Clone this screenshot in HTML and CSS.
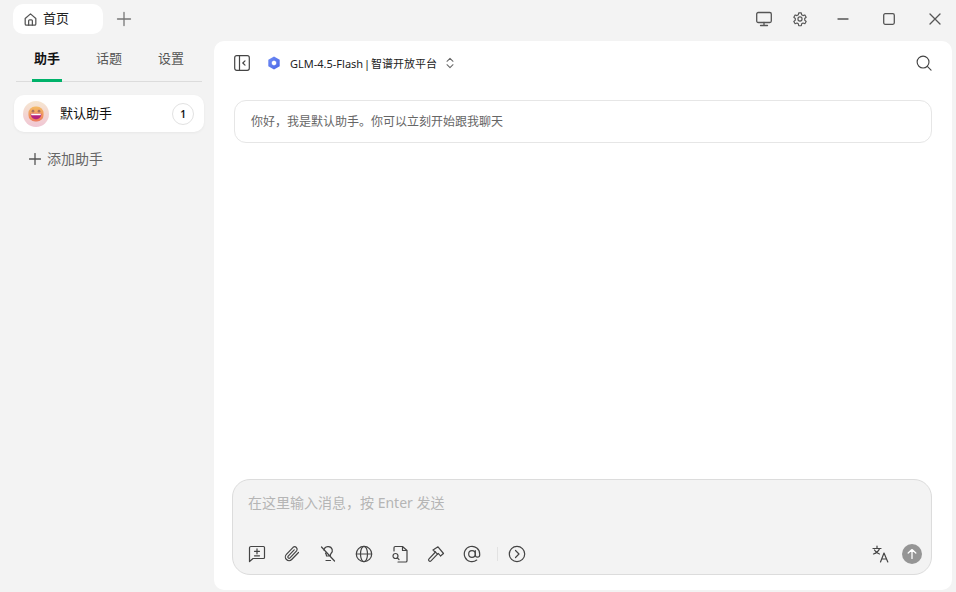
FILE: index.html
```html
<!DOCTYPE html>
<html lang="zh-CN">
<head>
    <meta charset="UTF-8">
    <title>首页</title>
    <link rel="stylesheet" href="styles.css">
</head>
<body>
    <div class="titlebar">
        <div class="tab">
            <svg class="icon-home" width="15" height="15" viewBox="0 0 24 24"><path d="M3.500 10.500 12 3l8.500 7.500V19a2 2 0 0 1-2 2h-13a2 2 0 0 1-2-2z"/><path d="M9 21v-7a1.500 1.500 0 0 1 1.500-1.500h3A1.500 1.500 0 0 1 15 14v7"/></svg>
            <span class="tab-label">首页</span>
        </div>
        <svg class="add-tab" width="16" height="16" viewBox="0 0 16 16"><path d="M8 1.500v13M1.500 8h13"/></svg>
        <div class="title-tools">
            <svg width="18" height="18" viewBox="0 0 18 18"><rect x="1.700" y="2.500" width="14.600" height="10" rx="1.500"/><path d="M9 12.500v3M5.500 15.500h7" /></svg>
            <svg class="gear" width="18" height="18" viewBox="-2 -2 28 28"><path d="M10 2.500h4l.6 3 2.100 1.200 2.900-1 2 3.500-2.300 2v2.600l2.300 2-2 3.500-2.900-1-2.100 1.200-.6 3h-4l-.6-3-2.100-1.200-2.900 1-2-3.500 2.300-2v-2.600l-2.300-2 2-3.500 2.900 1 2.100-1.200z"/><circle cx="12" cy="12" r="3.200"/></svg>
        </div>
        <div class="win-btns">
            <svg width="12" height="12" viewBox="0 0 12 12"><path d="M1 6h10"/></svg>
            <svg width="12" height="12" viewBox="0 0 12 12"><rect x="0.700" y="0.700" width="10.600" height="10.600" rx="1.500"/></svg>
            <svg width="12" height="12" viewBox="0 0 12 12"><path d="m1 1 10 10M11 1 1 11"/></svg>
        </div>
    </div>

    <div class="content">
        <aside class="sidebar">
            <div class="tabs">
                <div class="side-tab active">助手</div>
                <div class="side-tab">话题</div>
                <div class="side-tab">设置</div>
            </div>
            <div class="assistant">
                <div class="avatar">
                    <svg width="16" height="16" viewBox="0 0 18 18" class="emoji">
                        <defs><linearGradient id="face" x1="0" y1="0" x2="0" y2="1"><stop offset="0" stop-color="#f4bc63"/><stop offset="1" stop-color="#ee7a5c"/></linearGradient></defs>
                        <rect x="0.500" y="0.500" width="17" height="17" rx="7.500" fill="url(#face)"/>
                        <circle cx="5.600" cy="5.800" r="1.500" fill="#a9705e"/>
                        <circle cx="12.400" cy="5.800" r="1.500" fill="#a9705e"/>
                        <path d="M3 8.800h12c0 3.700-2.700 6.200-6 6.200s-6-2.500-6-6.200z" fill="#b4227e"/>
                        <path d="M3.500 8.800h11c0 .8-.2 1.300-.4 1.700H3.900c-.2-.4-.4-.9-.4-1.700z" fill="#fff"/>
                    </svg>
                </div>
                <span class="assistant-name">默认助手</span>
                <span class="count">1</span>
            </div>
            <div class="add-assistant">
                <svg width="12" height="12" viewBox="0 0 12 12"><path d="M6 .5v11M.5 6h11"/></svg>
                <span>添加助手</span>
            </div>
        </aside>

        <main class="main">
            <header class="chat-head">
                <svg class="stroke-icon" width="16" height="16" viewBox="0 0 16 16"><rect x="0.700" y="0.700" width="14.600" height="14.600" rx="2"/><path d="M5.500 1v14M11 5.800 8.800 8l2.200 2.200"/></svg>
                <svg class="model-logo" width="14" height="14" viewBox="0 0 14 14">
                    <defs><linearGradient id="logo" x1="0" y1="0" x2="1" y2="1"><stop offset="0" stop-color="#6f8df5"/><stop offset="1" stop-color="#4b66e6"/></linearGradient></defs>
                    <path d="M7 .5l5.700 3.200v6.600L7 13.500l-5.700-3.200V3.700z" fill="url(#logo)"/><path d="M7 4.500l2.200 1.200v2.600L7 9.500 4.800 8.300V5.700z" fill="#fff"/>
                </svg>
                <span class="model-name">GLM-4.5-Flash | 智谱开放平台</span>
                <svg class="stroke-icon chevrons" width="10" height="12" viewBox="0 0 10 14"><path d="M1.500 5 5 1.500 8.500 5M1.500 9 5 12.500 8.500 9"/></svg>
                <svg class="stroke-icon search" width="16" height="16" viewBox="0 0 17 17"><circle cx="7.500" cy="7.500" r="6.300"/><path d="m12.300 12.300 3.700 3.700"/></svg>
            </header>

            <div class="messages">
                <div class="bubble">你好，我是默认助手。你可以立刻开始跟我聊天</div>
            </div>

            <div class="composer">
                <div class="placeholder">在这里输入消息，按 Enter 发送</div>
                <div class="toolbar">
                    <svg class="stroke-icon" width="18" height="18" viewBox="0 0 18 18"><path d="M3 1.500h12.500a1 1 0 0 1 1 1v10a1 1 0 0 1-1 1H5l-3.500 3V3a1.500 1.500 0 0 1 1.500-1.500z"/><path d="M9 3.800v5M6.500 6.300h5M6.500 10.800h5"/></svg>
                    <svg class="stroke-icon clip" width="18" height="18" viewBox="0 0 18 18"><path d="m15.500 7.500-6.800 7a3.700 3.700 0 0 1-5.300-5.200l6.700-7a2.500 2.500 0 0 1 3.500 3.500l-6.600 7a1.200 1.200 0 0 1-1.800-1.700l6-6.300"/></svg>
                    <svg class="stroke-icon" width="18" height="18" viewBox="0 0 18 18"><path d="M5 5.500a4.200 4.200 0 0 1 8.200-1c.6 1.800-.3 3-1.200 4-.6.700-.7 1.500-.7 2.500H7.500c0-1.300-.4-2-1-2.800M7 15.500h4.500M2.500 2l13 14"/></svg>
                    <svg class="stroke-icon" width="18" height="18" viewBox="0 0 18 18"><circle cx="9" cy="9" r="7.700"/><ellipse cx="9" cy="9" rx="3.500" ry="7.700"/><path d="M1.500 9h15"/></svg>
                    <svg class="stroke-icon" width="18" height="18" viewBox="0 0 18 18"><path d="M3 6V2.800a1.300 1.300 0 0 1 1.300-1.300h7.200L16 5.500v10.200a1.300 1.300 0 0 1-1.300 1.300H7M11.500 1.500v4H16"/><circle cx="4.500" cy="11" r="2.500"/><path d="m6.300 12.800 1.700 1.700"/></svg>
                    <svg class="stroke-icon" width="18" height="18" viewBox="0 0 18 18"><path d="M8.500 7 2 13.800a1.400 1.400 0 0 0 2 2l6.500-6.600"/><path d="M6 5 11 1.800l5.500 6.700-3 2.500-2-2.500-1 .7-2-2z"/></svg>
                    <svg class="stroke-icon" width="18" height="18" viewBox="0 0 18 18"><circle cx="9" cy="9" r="3.300"/><path d="M12.300 5.700V10a2.200 2.200 0 0 0 4.400 0V9a7.700 7.700 0 1 0-3 6.100"/></svg>
                    <span class="tool-sep"></span>
                    <svg class="stroke-icon" width="18" height="18" viewBox="0 0 18 18"><circle cx="9" cy="9" r="7.700"/><path d="m7.500 5.500 3.500 3.500-3.500 3.500"/></svg>
                    <div class="toolbar-right">
                        <svg class="stroke-icon" width="18" height="18" viewBox="0 0 18 18"><path d="M1 3.500h8M5 1v2.500M7.500 3.500C6.500 6.500 4.500 8 1.500 9M2.500 5c1 2 3 3.500 5 4M8.500 17l3.500-9 3.800 9M9.800 14h4.800"/></svg>
                        <div class="send">
                            <svg width="10" height="10" viewBox="0 0 10 10"><path d="M5 9.500v-9M1.200 4 5 .5 8.800 4"/></svg>
                        </div>
                    </div>
                </div>
            </div>
        </main>
    </div>
</body>
</html>
```

FILE: styles.css
```css
* {
    box-sizing: border-box;
}

html, body {
    margin: 0;
    height: 100%;
}

body {
    display: flex;
    flex-direction: column;
    height: 592px;
    overflow: hidden;
    background-color: #f3f3f3;
    font-family: "Noto Sans", "Noto Sans CJK SC", sans-serif;
    color: #222;
}

svg {
    display: block;
    flex: none;
    fill: none;
    stroke: #555;
    stroke-width: 1.300;
    stroke-linecap: round;
    stroke-linejoin: round;
}

.icon-home {
    stroke-width: 2;
}

.gear {
    stroke-width: 1.800;
}

.titlebar {
    display: flex;
    align-items: center;
    height: 41px;
    padding: 4px 0 7px 13px;
}

.tab {
    display: flex;
    align-items: center;
    gap: 5px;
    width: 90px;
    height: 30px;
    padding-left: 10px;
    background-color: #fff;
    border-radius: 10px;
    font-size: 13px;
    line-height: 28px;
}

.tab-label {
    margin-top: -2px;
}

.add-tab {
    margin-left: 13px;
    stroke: #777;
}

.title-tools {
    display: flex;
    gap: 18px;
    margin-left: auto;
    margin-right: 28px;
}

.win-btns {
    display: flex;
    gap: 34px;
    margin-right: 15px;
}

.content {
    flex: 1;
    display: flex;
    min-height: 0;
}

.sidebar {
    width: 214px;
    padding: 0 10px 0 14px;
}

.tabs {
    display: flex;
    margin: 0 2px 13px 2px;
    border-bottom: 1px solid #dcdcdc;
}

.side-tab {
    flex: 1;
    height: 40px;
    padding-top: 7px;
    text-align: center;
    font-size: 13px;
    line-height: 20px;
    color: #555;
}

.side-tab.active {
    position: relative;
    color: #111;
    font-weight: 700;
}

.side-tab.active::after {
    content: "";
    position: absolute;
    left: 16px;
    bottom: -1px;
    width: 30px;
    height: 3px;
    background-color: #00b26a;
}

.assistant {
    display: flex;
    align-items: center;
    height: 37px;
    padding: 0 10px 0 9px;
    background-color: #fff;
    border-radius: 10px;
    box-shadow: 0 1px 3px rgba(0, 0, 0, 0.05);
    font-size: 13px;
}

.avatar {
    display: flex;
    align-items: center;
    justify-content: center;
    width: 26px;
    height: 26px;
    border-radius: 50%;
    background: linear-gradient(#f6e6d0, #f0c6d4);
}

.emoji {
    stroke: none;
}

.assistant-name {
    margin: -2px 0 0 11px;
    line-height: 36px;
    color: #111;
}

.count {
    margin-left: auto;
    width: 22px;
    height: 22px;
    border: 1px solid #e2e2e2;
    border-radius: 50%;
    text-align: center;
    font-size: 10px;
    font-weight: 600;
    line-height: 20px;
    color: #111;
}

.add-assistant {
    display: flex;
    align-items: center;
    gap: 6px;
    margin: 17px 0 0 15px;
    font-size: 14px;
    line-height: 20px;
    color: #666;
}

.main {
    flex: 1;
    display: flex;
    flex-direction: column;
    margin: 0 4px 2px 0;
    padding: 0 20px 15px 20px;
    background-color: #fff;
    border-radius: 10px;
}

.chat-head {
    display: flex;
    align-items: center;
    height: 44px;
    flex: none;
}

.stroke-icon {
    stroke: #444;
    stroke-width: 1.200;
}

.model-logo {
    margin-left: 17px;
    stroke: none;
}

.model-name {
    margin-left: 9px;
    font-size: 11px;
    word-spacing: -2px;
    color: #222;
}

.chevrons {
    margin-left: 8px;
    stroke: #666;
}

.search {
    margin-left: auto;
}

.messages {
    flex: 1;
    padding-top: 15px;
}

.bubble {
    height: 43px;
    padding-left: 16px;
    border: 1px solid #e6e6e6;
    border-radius: 12px;
    font-size: 12px;
    line-height: 42px;
    color: #666;
}

.composer {
    height: 96px;
    margin-left: -2px;
    padding: 14px 9px 0 15px;
    background-color: #f3f3f3;
    border: 1px solid #dcdcdc;
    border-radius: 18px;
}

.placeholder {
    font-size: 14px;
    line-height: 18px;
    color: #b5b5b5;
}

.toolbar {
    display: flex;
    align-items: center;
    gap: 18px;
    margin-top: 32px;
}

.clip {
    margin-left: -1px;
}

.tool-sep {
    width: 1px;
    height: 14px;
    margin-left: -2px;
    margin-right: -8px;
    background-color: #e2e2e2;
}

.toolbar-right {
    display: flex;
    align-items: center;
    gap: 12px;
    margin-left: auto;
}

.send {
    display: flex;
    align-items: center;
    justify-content: center;
    width: 20px;
    height: 20px;
    border-radius: 50%;
    background-color: #959595;
}

.send svg {
    stroke: #fff;
}
```
